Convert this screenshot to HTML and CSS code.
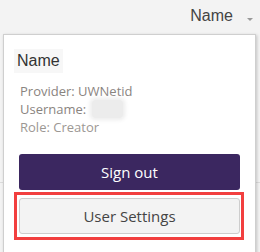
FILE: index.html
```html
<!DOCTYPE html>
<html lang="en">

<head>
    <meta charset="UTF-8">
    <meta name="viewport" content="width=device-width, initial-scale=1.0">
    <title>User menu</title>
    <link rel="stylesheet" href="styles.css">
</head>

<body>
    <div class="topbar">
        <span class="user-name">Name</span>
        <span class="caret"></span>
    </div>
    <div class="page">
        <div class="page-row"></div>
    </div>

    <div class="user-menu">
        <h4 class="menu-title">Name</h4>
        <div class="user-info">
            <div>Provider: UWNetid</div>
            <div>Username: <span class="blurred">netid</span></div>
            <div class="role">Role: Creator</div>
        </div>
        <button class="btn btn-primary">Sign out</button>
        <div class="highlight">
            <button class="btn btn-default">User Settings</button>
        </div>
    </div>
</body>

</html>
```

FILE: styles.css
```css
body {
    margin: 0;
    background: #f3f3f3;
    font-family: "Open Sans", sans-serif;
    color: #333;
    overflow: hidden;
}

.topbar {
    height: 34px;
    display: flex;
    justify-content: flex-end;
    align-items: flex-start;
    padding-right: 7px;
    box-sizing: border-box;
}

.user-name {
    font-family: "Liberation Sans", Arial, sans-serif;
    font-size: 16px;
    color: #444;
    margin-top: 7px;
}

.caret {
    width: 0;
    height: 0;
    border-left: 3px solid transparent;
    border-right: 3px solid transparent;
    border-top: 3px solid #999;
    margin: 18px 0 0 14px;
}

.page {
    height: 148px;
    border-bottom: 1px solid #dcdcdc;
}

/* dropdown sits over the page, runs past the bottom */
.user-menu {
    position: absolute;
    top: 34px;
    left: 3px;
    width: 253px;
    height: 224px;
    background: #fff;
    border: 1px solid #cfcfcf;
    box-shadow: 1px 1px 3px rgba(0, 0, 0, .2);
    box-sizing: border-box;
}

.menu-title {
    display: inline-block;
    margin: 14px 0 0 10px;
    padding: 2px 3px;
    background: #f7f7f7;
    font-family: "Liberation Sans", Arial, sans-serif;
    font-size: 16px;
    font-weight: 400;
    color: #333;
    line-height: 20px;
}

.user-info {
    margin: 9px 0 0 16px;
    font-size: 13px;
    line-height: 18px;
    color: #8a847f;
}

.user-info .role {
    color: #9c9793;
}

.blurred {
    color: transparent;
    background: #ececec;
    box-shadow: 0 0 4px 2px #ececec;
    border-radius: 3px;
    margin-left: 2px;
}

.btn {
    display: block;
    width: 221px;
    height: 36px;
    border-radius: 3px;
    font-family: "Open Sans", sans-serif;
    font-size: 15px;
    padding: 0;
    cursor: pointer;
}

.btn-primary {
    margin: 18px 0 0 15px;
    background: #3b2760;
    border: none;
    color: #fff;
}

.highlight {
    width: 230px;
    margin: 2px 0 0 10px;
    border: 3px solid #f23f3f;
    padding: 3px 1px 3px 2px;
    box-sizing: border-box;
}

.btn-default {
    background: #f3f3f3;
    border: 1px solid #cdcdcd;
    color: #444;
}
```
